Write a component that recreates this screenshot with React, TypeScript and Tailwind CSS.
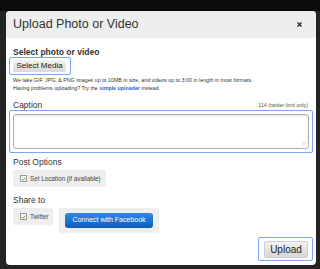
import { X } from 'lucide-react';

function Check() {
  return (
    <span className="flex items-center justify-center w-[7px] h-[7px] border border-[#9a9a9a] bg-[#f4f4f4] shrink-0">
      <svg viewBox="0 0 10 10" className="w-[6px] h-[6px]">
        <path d="M2 5.2 L4.2 7.4 L8.2 2.6" fill="none" stroke="#6a9a3e" strokeWidth="1.8" />
      </svg>
    </span>
  );
}

export default function App() {
  return (
    <div className="w-[320px] h-[269px] bg-[#242424] overflow-hidden flex flex-col" style={{ fontFamily: '"Liberation Sans", Arial, sans-serif' }}>
      <div className="h-[11px] bg-[#0b0b0b] shrink-0" />
      <div className="flex-1 pl-[6px] pr-[4px] pb-[4px]">
        <div className="h-full bg-white rounded-[4px] overflow-hidden flex flex-col">
          <div className="h-[27px] bg-[#eeeeee] flex items-center justify-between pl-[7px] pr-[13px] shrink-0">
            <h1 className="text-[12.5px] text-[#333] leading-none">Upload Photo or Video</h1>
            <X className="w-[7px] h-[7px] text-[#222]" strokeWidth={4} />
          </div>
          <div className="flex-1 px-[3px] pb-[4px] flex flex-col">
            <h2 className="mt-[9px] pl-[4px] text-[8.5px] font-bold text-[#333] leading-[10px]">Select photo or video</h2>
            <div className="w-[62px] h-[18px] border border-[#7aa7f5] rounded-[2px] pt-[2px] pb-[2px] pl-[3px] pr-[4px]">
              <div className="h-full rounded-[2px] bg-gradient-to-b from-[#f2f2f2] to-[#dadada] flex items-center justify-center text-[8px] text-[#222] whitespace-nowrap">
                Select Media
              </div>
            </div>
            <p className="pl-[4px] mt-[1px] text-[5.3px] text-[#333] leading-[8px] whitespace-nowrap">
              We take GIF, JPG, &amp; PNG images up to 10MB in size, and videos up to 3:00 in length in most formats.
            </p>
            <p className="pl-[4px] text-[5.3px] text-[#333] leading-[8px] whitespace-nowrap">
              Having problems uploading? Try the <span className="font-bold text-[#1f5fd0]">simple uploader</span> instead.
            </p>
            <div className="mt-[9px] flex items-center justify-between pl-[4px] pr-[5px] h-[9px]">
              <span className="text-[8.5px] text-[#333] leading-[9px]">Caption</span>
              <span className="text-[5.3px] text-[#555] leading-[9px]">114 (twitter limit only)</span>
            </div>
            <div className="h-[43px] border border-[#7aa7f5] rounded-[2px] p-[3px]">
              <div className="relative h-full rounded-[3px] border border-[#b0b0b0] bg-white shadow-[inset_0_1px_2px_rgba(0,0,0,0.12)]">
                <svg viewBox="0 0 6 6" className="absolute right-[2px] bottom-[2px] w-[4px] h-[4px]">
                  <rect x="4" y="0" width="1" height="1" fill="#999" />
                  <rect x="2" y="2" width="1" height="1" fill="#999" />
                  <rect x="4" y="2" width="1" height="1" fill="#999" />
                  <rect x="0" y="4" width="1" height="1" fill="#999" />
                  <rect x="2" y="4" width="1" height="1" fill="#999" />
                  <rect x="4" y="4" width="1" height="1" fill="#999" />
                </svg>
              </div>
            </div>
            <h2 className="pl-[4px] mt-[4px] text-[8.5px] text-[#333] leading-[10px]">Post Options</h2>
            <div className="ml-[4px] mt-[3px] w-[93px] h-[17px] bg-[#eeeeee] rounded-[2px] flex items-center gap-[3px] pl-[7px]">
              <Check />
              <span className="text-[6.3px] text-[#444] whitespace-nowrap">Set Location (if available)</span>
            </div>
            <h2 className="pl-[4px] mt-[8px] text-[8.5px] text-[#333] leading-[10px]">Share to</h2>
            <div className="ml-[4px] mt-[3px] flex gap-[6px] items-start">
              <div className="w-[40px] h-[17px] bg-[#eeeeee] rounded-[2px] flex items-center gap-[3px] pl-[7px]">
                <Check />
                <span className="text-[6.3px] text-[#444]">Twitter</span>
              </div>
              <div className="w-[100px] h-[25px] bg-[#eeeeee] rounded-[2px] flex items-center pl-[6px]">
                <div className="w-[88px] h-[15px] rounded-[3px] bg-gradient-to-b from-[#2f8ae4] to-[#0b5cbd] flex items-center justify-center text-[7px] text-white whitespace-nowrap">
                  Connect with Facebook
                </div>
              </div>
            </div>
            <div className="flex-1 flex items-end justify-end">
              <div className="w-[55px] h-[24px] border border-[#7aa7f5] rounded-[2px] pl-[5px] pr-[4px] pt-[3px] pb-[2px]">
                <div className="h-full rounded-[2px] bg-gradient-to-b from-[#f2f2f2] to-[#d6d6d6] border border-[#d0d0d0] flex items-center justify-center text-[10px] text-[#222]">
                  Upload
                </div>
              </div>
            </div>
          </div>
        </div>
      </div>
    </div>
  );
}
